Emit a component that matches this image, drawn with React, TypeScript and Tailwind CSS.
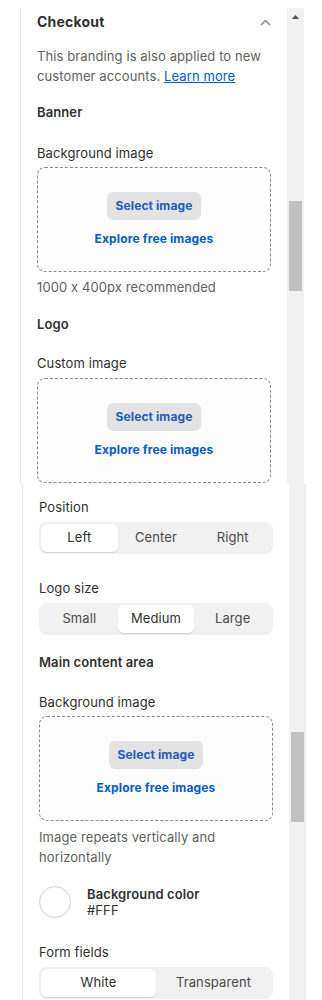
import React from "react";

function Dropzone() {
  return (
    <div className="h-[105px] rounded-lg border border-dashed border-[#8a8a8a] bg-[#fdfdfd] flex flex-col items-center pt-6">
      <div className="h-7 rounded-md bg-[#e3e3e3] px-[9px] flex items-center text-[12px] leading-4 font-bold tracking-[0.1px] text-[#1d5bbf]">
        Select image
      </div>
      <div className="mt-[11px] text-[12px] leading-4 font-bold tracking-[0.15px] text-[#005bd3]">Explore free images</div>
    </div>
  );
}

function Segmented({ items, active, cols }: { items: string[]; active: number; cols: string }) {
  return (
    <div className={`h-8 rounded-lg bg-[#f1f1f1] p-[2px] grid ${cols}`}>
      {items.map((it, i) => (
        <div
          key={it}
          className={
            i === active
              ? "rounded-md bg-white shadow-[0_1px_1px_rgba(0,0,0,0.12)] flex items-center justify-center text-[13px] text-[#303030]"
              : "flex items-center justify-center text-[13px] text-[#4a4a4a]"
          }
        >
          {it}
        </div>
      ))}
    </div>
  );
}

export default function App() {
  return (
    <div className="w-[322px] bg-white font-['Inter',sans-serif] [font-feature-settings:'calt'_0] tracking-[0.1px] text-[#303030] overflow-hidden">
      {/* top capture */}
      <div className="h-[484px] overflow-hidden pt-2 flex">
        <div className="w-5 shrink-0" />
        <div className="w-[267px] shrink-0 border-l border-[#e6e6e6] pl-4 pr-4">
          <div className="mt-1 h-5 flex items-center justify-between">
            <div className="text-[14px] leading-5 font-bold tracking-[0.2px] text-[#303030]">Checkout</div>
            <svg width="11" height="7" viewBox="0 0 11 7">
              <polyline points="1,6 5.5,1.5 10,6" fill="none" stroke="#8a8a8a" strokeWidth="1.5" />
            </svg>
          </div>
          <div className="mt-[14px] text-[13px] leading-5 text-[#616161]">
            This branding is also applied to new customer accounts.{" "}
            <span className="text-[#005bd3] underline">Learn more</span>
          </div>
          <div className="mt-4 text-[13px] leading-5 font-semibold">Banner</div>
          <div className="mt-[21px] text-[13px] leading-5">Background image</div>
          <div className="mt-1">
            <Dropzone />
          </div>
          <div className="mt-[5px] text-[13px] leading-5 text-[#616161]">1000 x 400px recommended</div>
          <div className="mt-[17px] text-[13px] leading-5 font-semibold">Logo</div>
          <div className="mt-[19px] text-[13px] leading-5">Custom image</div>
          <div className="mt-[5px]">
            <Dropzone />
          </div>
        </div>
        <div className="w-[17px] shrink-0 bg-[#f1f1f1] flex flex-col items-center">
          <div className="h-[17px] w-full flex items-center justify-center">
            <svg width="7" height="4" viewBox="0 0 7 4">
              <polygon points="3.5,0 7,4 0,4" fill="#505050" />
            </svg>
          </div>
          <div className="mt-[176px] w-[13px] h-[90px] bg-[#c1c1c1]" />
        </div>
      </div>
      {/* bottom capture */}
      <div className="h-[516px] overflow-hidden flex">
        <div className="w-[22px] shrink-0" />
        <div className="w-[267px] shrink-0 border-l border-[#e6e6e6] pl-4 pr-4">
          <div className="mt-[13px] text-[13px] leading-5">Position</div>
          <div className="mt-[5px]">
            <Segmented items={["Left", "Center", "Right"]} active={0} cols="grid-cols-3" />
          </div>
          <div className="mt-6 text-[13px] leading-5">Logo size</div>
          <div className="mt-[5px]">
            <Segmented items={["Small", "Medium", "Large"]} active={1} cols="grid-cols-3" />
          </div>
          <div className="mt-[17px] text-[13px] leading-5 font-semibold">Main content area</div>
          <div className="mt-5 text-[13px] leading-5">Background image</div>
          <div className="mt-1">
            <Dropzone />
          </div>
          <div className="mt-[6px] text-[13px] leading-5 text-[#616161]">
            Image repeats vertically and horizontally
          </div>
          <div className="mt-[19px] flex items-center gap-4">
            <div className="w-8 h-8 rounded-full border border-[#d4d4d4] bg-white shrink-0" />
            <div className="text-[13px] leading-4">
              <div className="font-semibold">Background color</div>
              <div>#FFF</div>
            </div>
          </div>
          <div className="mt-6 text-[13px] leading-5">Form fields</div>
          <div className="mt-[5px]">
            <Segmented items={["White", "Transparent"]} active={0} cols="grid-cols-2" />
          </div>
        </div>
        <div className="w-[17px] shrink-0 bg-[#f1f1f1] flex flex-col items-center">
          <div className="mt-[248px] w-[13px] h-[90px] bg-[#c1c1c1]" />
        </div>
      </div>
    </div>
  );
}
